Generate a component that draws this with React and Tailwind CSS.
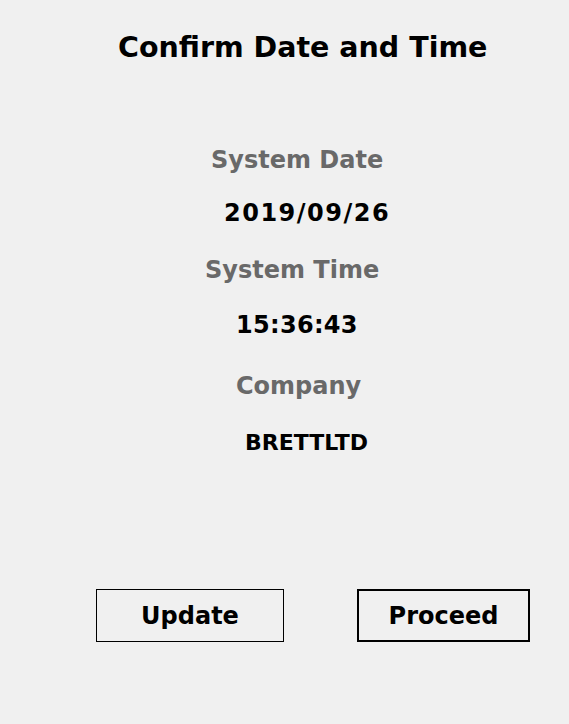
export default function App() {
  const font = { fontFamily: '"DejaVu Sans", Tahoma, sans-serif' };
  return (
    <div className="w-[569px] h-[724px] bg-[#f0f0f0] flex flex-col pt-[28px]" style={font}>
      <div className="h-[40px] flex items-center pl-[118px] text-[28.5px] font-bold text-black">
        Confirm Date and Time
      </div>
      <div className="h-[40px] mt-[72px] flex items-center pl-[211px] text-[24px] font-bold text-[#696969]">
        System Date
      </div>
      <div className="h-[40px] mt-[13px] flex items-center pl-[224px] text-[24px] font-bold text-black tracking-[1.5px]">
        2019/09/26
      </div>
      <div className="h-[40px] mt-[17px] flex items-center pl-[205px] text-[24px] font-bold text-[#696969]">
        System Time
      </div>
      <div className="h-[40px] mt-[15px] flex items-center pl-[236px] text-[24px] font-bold text-black tracking-[0.3px]">
        15:36:43
      </div>
      <div className="h-[40px] mt-[21px] flex items-center pl-[236px] text-[24px] font-bold text-[#696969]">
        Company
      </div>
      <div className="h-[40px] mt-[16px] flex items-center pl-[245px] text-[22px] font-bold text-black">
        BRETTLTD
      </div>
      <div className="flex mt-[127px]">
        <button className="ml-[96px] w-[188px] h-[53px] border border-black bg-[#f0f0f0] text-[24px] font-bold text-black flex items-center justify-center">
          Update
        </button>
        <button className="ml-[73px] w-[173px] h-[53px] border-2 border-black bg-[#f0f0f0] text-[24px] font-bold text-black flex items-center justify-center">
          Proceed
        </button>
      </div>
    </div>
  );
}
